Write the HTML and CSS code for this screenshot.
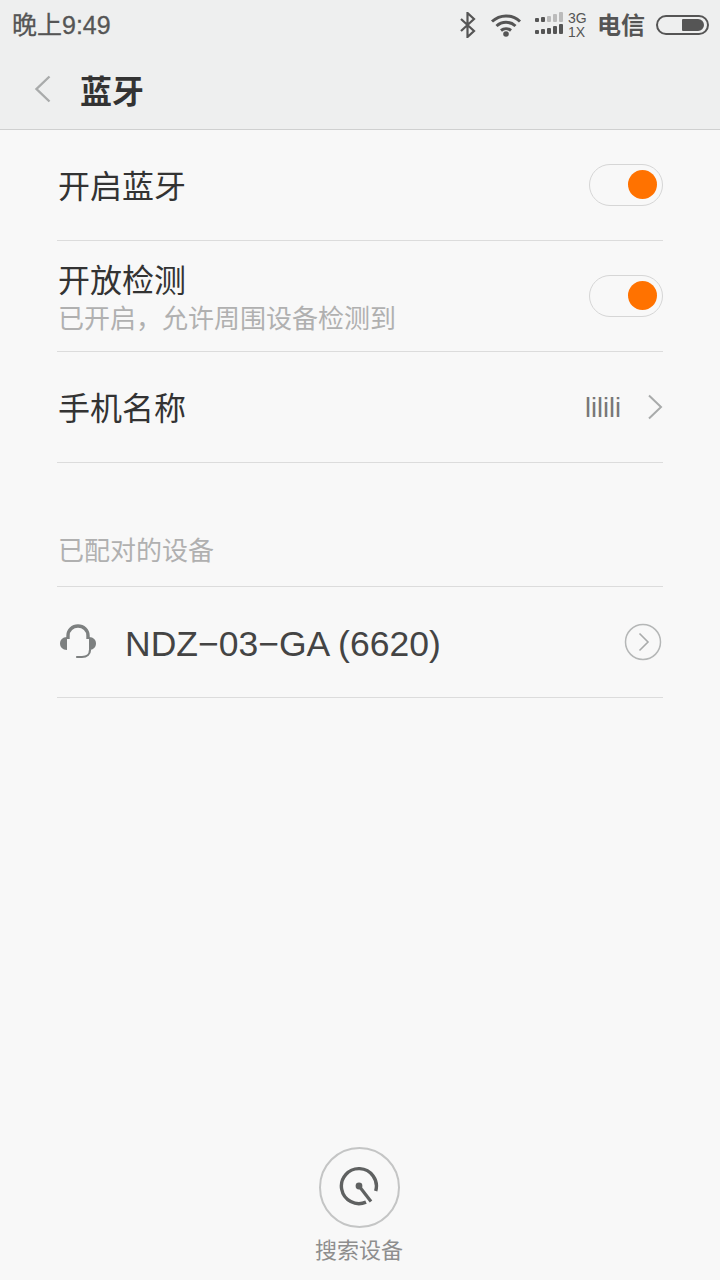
FILE: index.html
```html
<!DOCTYPE html>
<html lang="zh-CN">
<head>
    <meta charset="UTF-8">
    <meta name="viewport" content="width=device-width, initial-scale=1.0">
    <title>蓝牙</title>
    <link rel="stylesheet" href="styles.css">
</head>
<body>
    <div class="screen">
        <header class="top-bar">
            <div class="status-bar">
                <span class="status-time">晚上9:49</span>
                <div class="status-icons">
                    <svg class="icon-bt" width="20" height="26" viewBox="0 0 20 26"><path d="M3 7l13 12-6.500 6V1l6.500 6L3 19" fill="none" stroke="#555" stroke-width="2.2"/></svg>
                    <svg class="icon-wifi" width="32" height="24" viewBox="0 0 32 24"><path d="M2 8.500c8-7.500 20-7.500 28 0M6.500 13c5.500-5 13.500-5 19 0M11 17.500c3-2.500 7-2.500 10 0" fill="none" stroke="#555" stroke-width="3"/><circle cx="16" cy="21" r="2.800" fill="#555"/></svg>
                    <svg class="icon-signal" width="29" height="26" viewBox="0 0 29 26">
                        <g fill="#555"><rect x="0" y="6" width="4" height="4" rx="1"/><rect x="6" y="5" width="4" height="5" rx="1"/></g>
                        <g fill="#bbb"><rect x="12" y="4" width="4" height="6" rx="1"/><rect x="18" y="2" width="4" height="8" rx="1"/><rect x="24" y="0" width="4" height="10" rx="1"/></g>
                        <g fill="#555"><rect x="0" y="18" width="4" height="4" rx="1"/><rect x="6" y="17" width="4" height="5" rx="1"/><rect x="12" y="16" width="4" height="6" rx="1"/><rect x="18" y="14" width="4" height="8" rx="1"/><rect x="24" y="12" width="4" height="10" rx="1"/></g>
                    </svg>
                    <div class="net-type"><span>3G</span><span>1X</span></div>
                    <span class="carrier">电信</span>
                    <div class="battery"><div class="battery-fill"></div></div>
                </div>
            </div>
            <div class="title-bar">
                <svg class="back" width="18" height="28" viewBox="0 0 18 28"><path d="M15.500 1.500L2.500 14l13 12.500" fill="none" stroke="#a9abab" stroke-width="2.400"/></svg>
                <h1>蓝牙</h1>
            </div>
        </header>

        <main class="content">
            <div class="row">
                <div class="row-text"><div class="row-title">开启蓝牙</div></div>
                <div class="switch"><div class="knob"></div></div>
            </div>
            <div class="row">
                <div class="row-text">
                    <div class="row-title">开放检测</div>
                    <div class="row-sub">已开启，允许周围设备检测到</div>
                </div>
                <div class="switch"><div class="knob"></div></div>
            </div>
            <div class="row">
                <div class="row-text"><div class="row-title">手机名称</div></div>
                <span class="row-value">lilili</span>
                <svg class="chevron" width="16" height="26" viewBox="0 0 16 26"><path d="M2 1.500L14 13 2 24.500" fill="none" stroke="#a9abab" stroke-width="2"/></svg>
            </div>

            <div class="section-title">已配对的设备</div>
            <div class="row device-row">
                <svg class="headset" width="38" height="36" viewBox="0 0 38 36">
                    <path d="M9 15V11.500a10 9.500 0 0 1 20 0V15" fill="none" stroke="#7d8080" stroke-width="3.400"/>
                    <path d="M8 13C3.500 13 1 16 1 19.500S3.500 26 8 26Z" fill="#7d8080"/>
                    <path d="M30 13c4.500 0 7 3 7 6.500S34.500 26 30 26Z" fill="#7d8080"/>
                    <path d="M31 26c0 4-3 7-8 7h-5" fill="none" stroke="#7d8080" stroke-width="2.200" stroke-linecap="round"/>
                </svg>
                <div class="device-name">NDZ−03−GA (6620)</div>
                <svg class="detail" width="38" height="38" viewBox="0 0 38 38">
                    <circle cx="19" cy="19" r="17.500" fill="none" stroke="#b5b7b7" stroke-width="1.500"/>
                    <path d="M15.500 10.500l8.500 8.500-8.500 8.500" fill="none" stroke="#a9abab" stroke-width="1.600"/>
                </svg>
            </div>
        </main>

        <footer class="search">
            <div class="search-btn">
                <svg width="42" height="42" viewBox="0 0 42 42">
                    <path d="M28 37.100A17.500 17.500 0 1 1 37.700 26" fill="none" stroke="#5f6161" stroke-width="3.400"/>
                    <path d="M21 21l12 15.500" stroke="#5f6161" stroke-width="3.200" fill="none"/>
                    <circle cx="21" cy="21" r="3.400" fill="#5f6161"/>
                </svg>
            </div>
            <div class="search-label">搜索设备</div>
        </footer>
    </div>
</body>
</html>
```

FILE: styles.css
```css
* {
    box-sizing: border-box;
}

body {
    margin: 0;
    font-family: "Liberation Sans", "Noto Sans CJK SC", sans-serif;
    background-color: #f8f8f8;
    color: #333;
}

.screen {
    width: 720px;
    height: 1280px;
    display: flex;
    flex-direction: column;
    overflow: hidden;
}

.top-bar {
    height: 130px;
    flex-shrink: 0;
    background-color: #eeefef;
    border-bottom: 1px solid #cfd0d0;
}

.status-bar {
    height: 50px;
    padding: 0 11px 0 12px;
    display: flex;
    justify-content: space-between;
    align-items: center;
    color: #555;
}

.status-time {
    padding-bottom: 4px;
    font-size: 25px;
    -webkit-text-stroke: 0.3px #555;
}

.status-icons {
    display: flex;
    align-items: center;
}

.icon-wifi {
    margin-left: 12px;
}

.icon-signal {
    margin-left: 13px;
}

.net-type {
    width: 22px;
    margin-left: 4px;
    padding-bottom: 1px;
    display: flex;
    flex-direction: column;
    font-size: 14px;
    line-height: 14px;
}

.carrier {
    margin-left: 7px;
    padding-bottom: 4px;
    font-size: 24px;
    font-weight: bold;
}

.battery {
    width: 53px;
    height: 20px;
    margin-left: 11px;
    padding: 2px 3px;
    display: flex;
    justify-content: flex-end;
    border: 2px solid #555;
    border-radius: 10px;
}

.battery-fill {
    width: 22px;
    background-color: #555;
    border-radius: 1px 6px 6px 1px;
}

.title-bar {
    height: 79px;
    padding: 0 0 2px 34px;
    display: flex;
    align-items: center;
}

.title-bar h1 {
    margin: 0 0 0 28px;
    font-size: 32px;
    font-weight: bold;
    color: #333;
}

.content {
    flex: 1;
    padding: 0 57px;
}

.row {
    height: 111px;
    display: flex;
    align-items: center;
    border-bottom: 1px solid #dcdcdc;
}

.row-text {
    flex: 1;
    padding: 4px 0 0 1px;
}

.row-title {
    font-size: 32px;
    line-height: 38px;
    color: #333;
}

.row-sub {
    margin-top: 4px;
    font-size: 26px;
    line-height: 30px;
    color: #b0b0b0;
}

.switch {
    width: 74px;
    height: 42px;
    padding: 5px;
    display: flex;
    justify-content: flex-end;
    border: 1px solid #d6d6d6;
    border-radius: 21px;
}

.knob {
    width: 29px;
    height: 29px;
    background-color: #ff7200;
    border-radius: 50%;
}

.row-value {
    padding-top: 2px;
    margin-right: 26px;
    font-size: 27px;
    color: #777;
}

.section-title {
    height: 124px;
    padding: 72px 0 0 1px;
    font-size: 26px;
    line-height: 32px;
    color: #b0b0b0;
    border-bottom: 1px solid #dcdcdc;
}

.headset {
    margin-left: 2px;
}

.device-name {
    flex: 1;
    margin-left: 28px;
    padding-top: 4px;
    font-size: 35.5px;
    color: #444;
}

.detail {
    margin-right: 1px;
}

.search {
    height: 133px;
    flex-shrink: 0;
    padding-right: 2px;
    display: flex;
    flex-direction: column;
    align-items: center;
}

.search-btn {
    width: 81px;
    height: 81px;
    padding-bottom: 3px;
    display: flex;
    align-items: center;
    justify-content: center;
    border: 2px solid #c4c5c5;
    border-radius: 50%;
}

.search-label {
    margin-top: 8px;
    font-size: 22px;
    line-height: 30px;
    color: #8e8e8e;
}
```
